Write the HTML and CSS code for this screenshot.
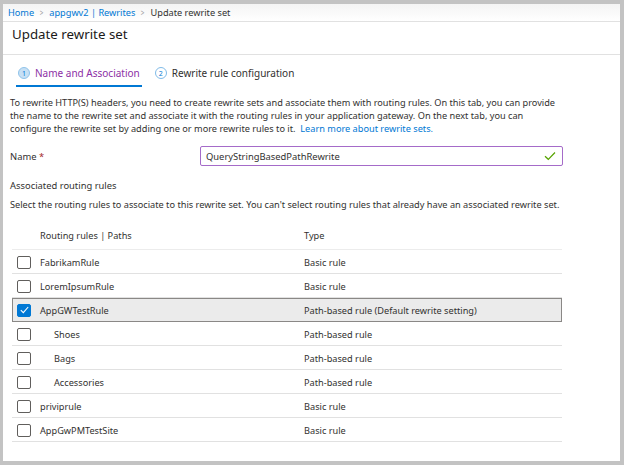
FILE: index.html
```html
<!DOCTYPE html>
<html>
<head>
<meta charset="utf-8">
<link rel="stylesheet" href="styles.css">
</head>
<body>
<div class="frame">
  <div class="crumbs">
    <a class="link">Home</a>
    <span class="chev">&gt;</span>
    <a class="link">appgwv2 | Rewrites</a>
    <span class="chev">&gt;</span>
    <span class="current">Update rewrite set</span>
  </div>
  <div class="titlebar"><h1>Update rewrite set</h1></div>
  <div class="content">
    <div class="tabs">
      <div class="tab active"><span class="step">1</span><span class="tablabel">Name and Association</span></div>
      <div class="tab"><span class="step">2</span><span class="tablabel">Rewrite rule configuration</span></div>
    </div>
    <p class="intro">To rewrite HTTP(S) headers, you need to create rewrite sets and associate them with routing rules. On this tab, you can provide<br>the name to the rewrite set and associate it with the routing rules in your application gateway. On the next tab, you can<br>configure the rewrite set by adding one or more rewrite rules to it. &nbsp;<a class="link">Learn more about rewrite sets.</a></p>
    <div class="field">
      <label class="fieldlabel">Name <span class="req">*</span></label>
      <div class="input">
        <span>QueryStringBasedPathRewrite</span>
        <svg class="ok" width="12" height="10" viewBox="0 0 12 10"><path d="M1 5.2 L4.3 8.3 L11 1.5" fill="none" stroke="#57a300" stroke-width="1.2"/></svg>
      </div>
    </div>
    <div class="section">Associated routing rules</div>
    <div class="hint">Select the routing rules to associate to this rewrite set. You can't select routing rules that already have an associated rewrite set.</div>
    <div class="table">
      <div class="row head"><span class="spacer"></span><span class="c1">Routing rules | Paths</span><span class="c2">Type</span></div>
      <div class="row"><span class="box"></span><span class="c1">FabrikamRule</span><span class="c2">Basic rule</span></div>
      <div class="row"><span class="box"></span><span class="c1">LoremIpsumRule</span><span class="c2">Basic rule</span></div>
      <div class="row selected"><span class="box checked"><svg width="9" height="8" viewBox="0 0 9 8"><path d="M0.8 4.2 L3.3 6.6 L8.2 1" fill="none" stroke="#fff" stroke-width="1.1"/></svg></span><span class="c1">AppGWTestRule</span><span class="c2">Path-based rule (Default rewrite setting)</span></div>
      <div class="row"><span class="box"></span><span class="c1 sub">Shoes</span><span class="c2">Path-based rule</span></div>
      <div class="row"><span class="box"></span><span class="c1 sub">Bags</span><span class="c2">Path-based rule</span></div>
      <div class="row"><span class="box"></span><span class="c1 sub">Accessories</span><span class="c2">Path-based rule</span></div>
      <div class="row"><span class="box"></span><span class="c1">priviprule</span><span class="c2">Basic rule</span></div>
      <div class="row"><span class="box"></span><span class="c1">AppGwPMTestSite</span><span class="c2">Basic rule</span></div>
    </div>
  </div>
</div>
</body>
</html>
```

FILE: styles.css
```css
html, body {
  margin: 0;
  padding: 0;
  height: 100%;
}
body {
  background: #c3c3c3;
  font-family: "Noto Sans", "Open Sans", sans-serif;
  font-size: 9.2px;
  color: #323130;
}
.frame {
  box-sizing: border-box;
  margin: 4px 4px 0 3px;
  height: 457px;
  background: #fff;
  display: flex;
  flex-direction: column;
}
.crumbs {
  height: 17px;
  display: flex;
  align-items: center;
  gap: 5px;
  padding-left: 5px;
  background: linear-gradient(#f4f4f4, #ffffff);
  border-bottom: 1px solid #e1e1e1;
  font-size: 9.2px;
}
.link {
  color: #0078d4;
}
.chev {
  color: #999;
  font-size: 9px;
  transform: scaleX(0.7);
}
.current {
  color: #323130;
}
.titlebar {
  box-sizing: border-box;
  height: 33px;
  border-bottom: 1px solid #e1e1e1;
  padding: 3px 0 0 9px;
}
h1 {
  margin: 0;
  line-height: 18px;
  font-size: 13.3px;
  font-weight: 400;
  color: #1b1a19;
}
.content {
  padding: 0 7px;
}
.tabs {
  display: flex;
  gap: 11px;
  margin: 6px 0 0 6px;
}
.tab {
  display: flex;
  align-items: center;
  gap: 5px;
  height: 24px;
  padding: 0 2px;
  border-bottom: 2px solid transparent;
  font-size: 10px;
}
.tab.active {
  border-bottom-color: #0078d4;
}
.tab.active .tablabel {
  color: #8c2fa5;
}
.step {
  box-sizing: border-box;
  width: 12px;
  height: 12px;
  border-radius: 50%;
  border: 1px solid #80bbe8;
  color: #0078d4;
  font-size: 7px;
  display: flex;
  align-items: center;
  justify-content: center;
  background: #fff;
}
.tab.active .step {
  background: #c7e0f4;
  border-color: #8fc3ea;
}
.intro {
  margin: 9px 0 0 0;
  line-height: 13px;
  font-size: 9.2px;
  white-space: nowrap;
}
.field {
  display: flex;
  align-items: center;
  margin-top: 11px;
}
.fieldlabel {
  width: 190px;
  font-size: 9.4px;
}
.req {
  color: #a4262c;
}
.input {
  box-sizing: border-box;
  width: 363px;
  height: 20px;
  border: 1px solid #a56bc9;
  border-radius: 2px;
  display: flex;
  align-items: center;
  justify-content: space-between;
  padding: 0 6px 0 5px;
  font-size: 9.4px;
}
.section {
  margin-top: 13px;
  font-size: 9.4px;
  line-height: 13px;
}
.hint {
  margin-top: 6px;
  font-size: 9.2px;
  line-height: 13px;
}
.table {
  margin: 13px 0 0 2px;
  width: 550px;
}
.row {
  box-sizing: border-box;
  height: 24px;
  display: flex;
  align-items: center;
  border-bottom: 1px solid #e1e1e1;
  font-size: 9.2px;
  padding: 1px 0 0 5px;
}
.row.head {
  height: 26px;
  border-bottom-color: #ececec;
  padding: 0 0 2px 5px;
}
.row.selected {
  background: #ebebeb;
  border: 1px solid #8a8886;
  padding: 0 0 0 4px;
}
.spacer {
  width: 14px;
  flex: none;
}
.box {
  box-sizing: border-box;
  width: 14px;
  height: 13px;
  border: 1px solid #605e5c;
  border-radius: 2px;
  flex: none;
  display: flex;
  align-items: center;
  justify-content: center;
  background: #fff;
}
.box.checked {
  background: #0078d4;
  border-color: #0078d4;
}
.c1 {
  box-sizing: border-box;
  width: 273px;
  padding-left: 9px;
  flex: none;
}
.c1.sub {
  padding-left: 23px;
}
.c2 {
  flex: 1;
}
```
